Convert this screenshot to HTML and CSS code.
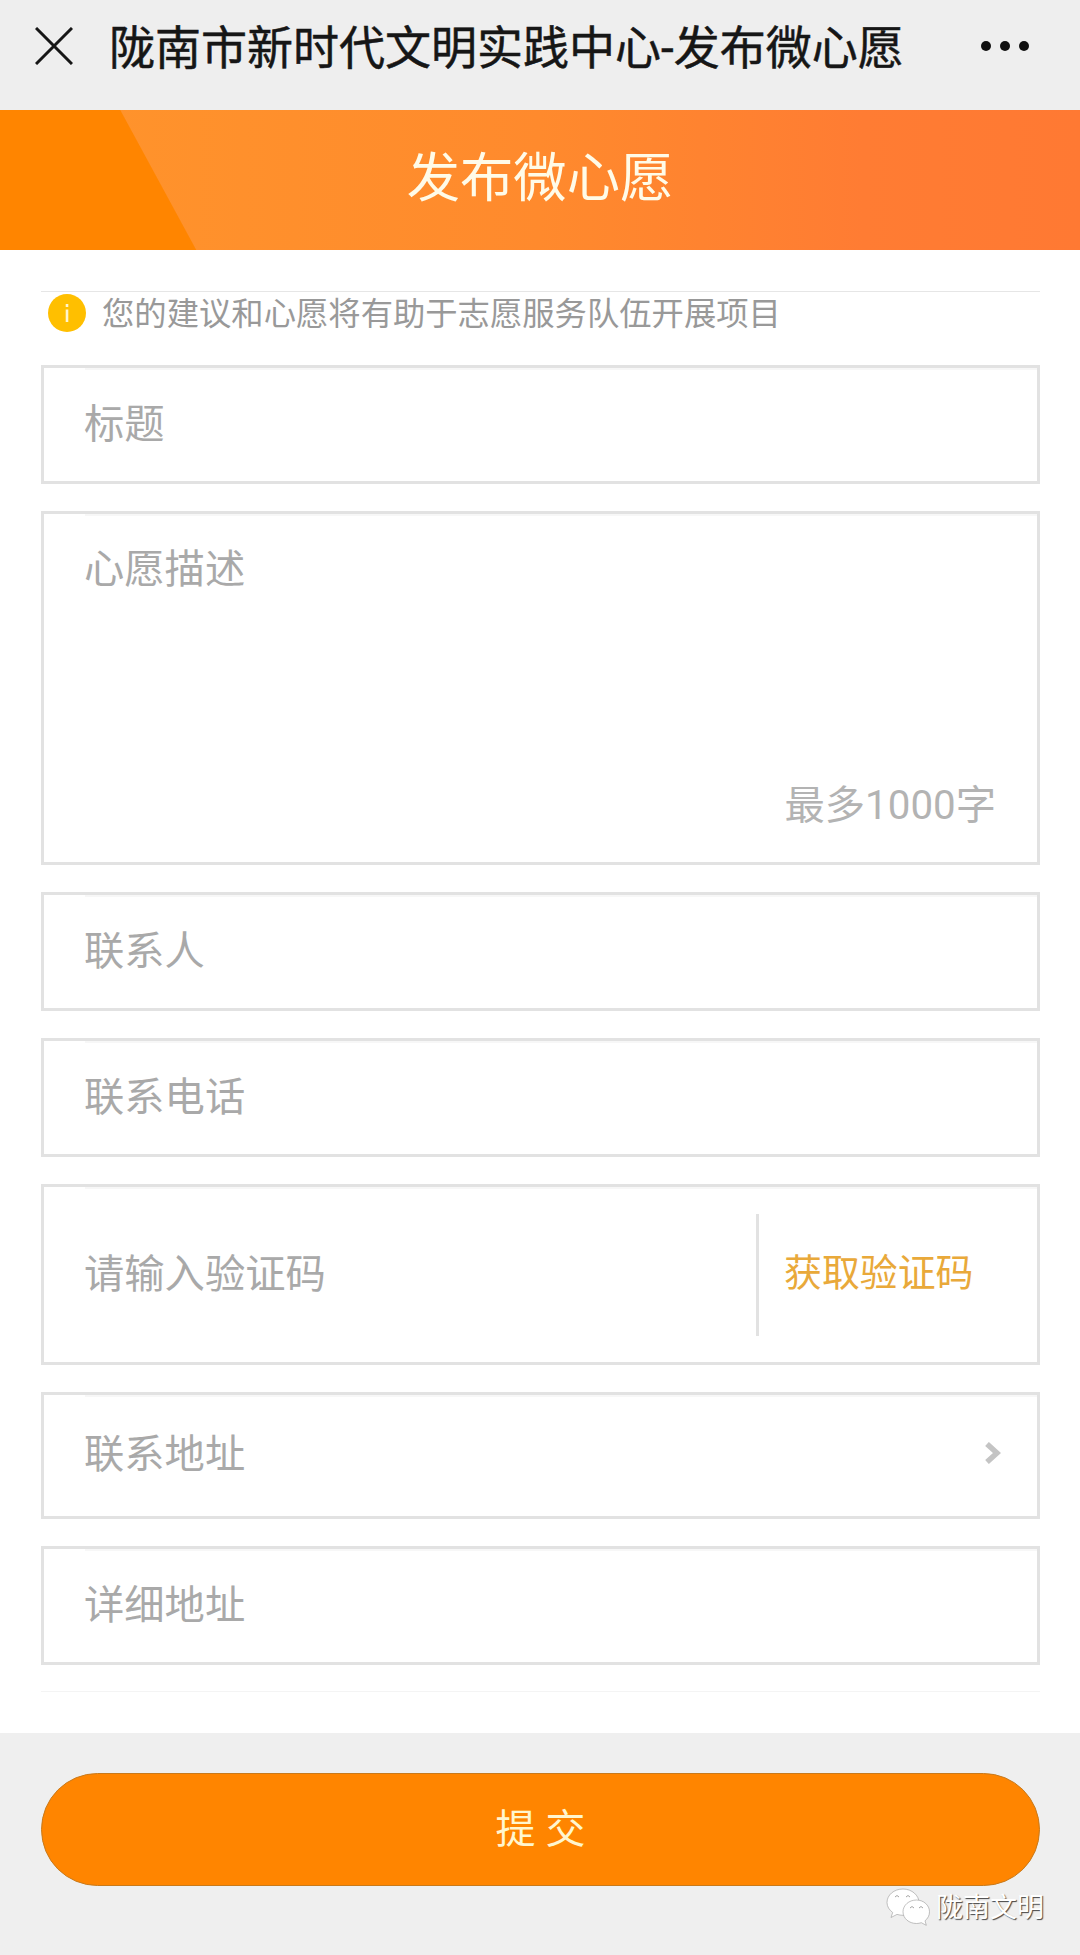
FILE: index.html
```html
<!DOCTYPE html>
<html lang="zh-CN">
<head>
    <meta charset="UTF-8">
    <meta name="viewport" content="width=device-width, initial-scale=1.0">
    <title>陇南市新时代文明实践中心-发布微心愿</title>
    <link rel="stylesheet" href="styles.css">
</head>
<body>
    <header class="navbar">
        <svg class="close" viewBox="0 0 38 38"><path d="M1 1L37 37M37 1L1 37"/></svg>
        <div class="navbar-title">陇南市新时代文明实践中心-发布微心愿</div>
        <svg class="more" viewBox="0 0 50 12"><circle cx="6" cy="6" r="5"/><circle cx="25" cy="6" r="5"/><circle cx="44" cy="6" r="5"/></svg>
    </header>

    <div class="banner">
        <h1>发布微心愿</h1>
    </div>

    <form class="wish-form">
        <div class="tip">
            <svg class="tip-icon" viewBox="0 0 38 38"><circle cx="19" cy="19" r="19"/><path d="M17.700 10h2.600v3h-2.600zM17.700 15.500h2.600V28h-2.600z"/></svg>
            <span>您的建议和心愿将有助于志愿服务队伍开展项目</span>
        </div>

        <label class="field">
            <span>标题</span>
            <input type="text">
        </label>

        <label class="field field-desc">
            <span>心愿描述</span>
            <textarea maxlength="1000"></textarea>
            <span class="limit">最多1000字</span>
        </label>

        <label class="field">
            <span>联系人</span>
            <input type="text">
        </label>

        <label class="field">
            <span>联系电话</span>
            <input type="tel">
        </label>

        <div class="field field-code">
            <label class="code-label">
                <span>请输入验证码</span>
                <input type="text">
            </label>
            <a class="get-code">获取验证码</a>
        </div>

        <div class="field field-select">
            <span>联系地址</span>
            <svg class="arrow" viewBox="0 0 16 22"><path d="M2 2L12 11L2 20"/></svg>
        </div>

        <label class="field">
            <span>详细地址</span>
            <input type="text">
        </label>
    </form>

    <footer class="footer">
        <button class="submit" type="button">提 交</button>
        <div class="watermark">
            <svg class="wechat" viewBox="0 0 44 38">
                <path d="M17 1C8 1 1 7 1 14.500c0 4 2.300 7.500 5.700 10L5 29.500l6-3.100c2 .6 4 .9 6 .9 9 0 16-5.800 16-12.800S26 1 17 1z"/>
                <path d="M30.500 12C23 12 17 17.200 17 23.800s6 11.700 13.500 11.700c1.700 0 3.300-.3 4.800-.8l5 2.600-1.300-4.500c2.800-2.200 4.500-5.400 4.500-9C43.500 17.200 37.500 12 30.500 12z"/>
                <path class="eyes" d="M9 9q2-3 4 0M20 9q2-3 4 0M24 20q2-3 4 0M33 20q2-3 4 0"/>
            </svg>
            <span>陇南文明</span>
        </div>
    </footer>
</body>
</html>
```
FILE: styles.css
```css
* {
    box-sizing: border-box;
}
body {
    margin: 0;
    font-family: Roboto, "Noto Sans CJK SC", sans-serif;
    background: #fff;
    color: #a9a9a9;
}
.navbar {
    display: flex;
    align-items: center;
    height: 110px;
    padding: 0 50px 18px 35px;
    background: #eee;
    color: #161616;
}
.close {
    width: 38px;
    height: 38px;
    fill: none;
    stroke: #161616;
    stroke-width: 3;
}
.navbar-title {
    flex: 1;
    margin-left: 36px;
    padding-top: 3px;
    font-size: 46px;
    line-height: 66px;
    white-space: nowrap;
    -webkit-text-stroke: 0.5px #161616;
}
.more {
    width: 50px;
    height: 12px;
    fill: #111;
}
.banner {
    display: flex;
    justify-content: center;
    height: 140px;
    background:
        linear-gradient(61.5deg, #ff8500 0 172px, transparent 173px),
        linear-gradient(90deg, #ff952b, #ff8a2d 50%, #ff7c33 80%, #ff7933);
}
.banner h1 {
    margin: 0;
    font-size: 53.3px;
    font-weight: 400;
    line-height: 138px;
    color: #fffbe8;
}
.wish-form {
    display: flex;
    flex-direction: column;
    gap: 27px;
    margin: 41px 40px 0 41px;
    border-top: 1px solid #e6e6e6;
    border-bottom: 1px solid #f4f4f4;
    padding-bottom: 26px;
}
.tip {
    display: flex;
    align-items: center;
    gap: 16px;
    height: 46px;
    padding: 0 0 4px 7px;
    font-size: 32.35px;
    line-height: 42px;
    color: #999;
}
.tip span {
    padding-top: 2px;
}
.tip-icon {
    width: 38px;
    height: 38px;
    fill: #ffbf00;
}
.tip-icon path {
    fill: #fff5d0;
}
.field {
    display: flex;
    align-items: center;
    height: 119px;
    padding: 0 41px 0 40px;
    border: 3px solid #e2e2e2;
    /* faint divider right under the top border */
    background: linear-gradient(#f7f7f7, #f7f7f7) 41px 0 / 100% 2px no-repeat;
    font-size: 40.3px;
    line-height: 56px;
}
.field input,
.field textarea {
    flex: 1;
    min-width: 0;
    padding: 0;
    border: 0;
    outline: 0;
    background: none;
    font: inherit;
    resize: none;
}
.field-desc {
    flex-direction: column;
    align-items: flex-start;
    height: 354px;
    padding: 28px 41px 28px 40px;
}
.limit {
    align-self: flex-end;
    color: #b3b3b3;
}
.field-code {
    height: 181px;
    padding-right: 0;
}
.code-label {
    display: flex;
    flex: 1;
    align-items: center;
}
.get-code {
    width: 281px;
    height: 122px;
    padding-left: 25px;
    border-left: 3px solid #e2e2e2;
    font-size: 37.9px;
    line-height: 118px;
    color: #e9a93a;
}
.field-select {
    justify-content: space-between;
    height: 127px;
    padding: 0 36px 2px 40px;
}
.arrow {
    width: 16px;
    height: 22px;
    margin-bottom: 3px;
    fill: none;
    stroke: #c4c4c4;
    stroke-width: 5.5;
}
.footer {
    height: 222px;
    margin-top: 41px;
    padding: 40px 35px 0 41px;
    background: #efefef;
}
.submit {
    display: block;
    width: 999px;
    height: 113px;
    padding: 0 0 8px;
    border: 1px solid #c87a1c;
    border-radius: 57px;
    background: #ff8500;
    font-family: inherit;
    font-size: 40px;
    color: #fff6cf;
}
.watermark {
    display: flex;
    justify-content: flex-end;
    align-items: center;
    gap: 6px;
    padding-right: 1px;
    font-size: 27px;
    line-height: 40px;
    color: #fff;
    text-shadow: 1px 1px 1px #444;
}
.watermark span {
    padding-top: 2px;
}
.wechat {
    width: 44px;
    height: 38px;
    fill: #fff;
    stroke: #999;
    stroke-width: 0.6;
}
.wechat .eyes {
    fill: none;
    stroke: #666;
}
```
